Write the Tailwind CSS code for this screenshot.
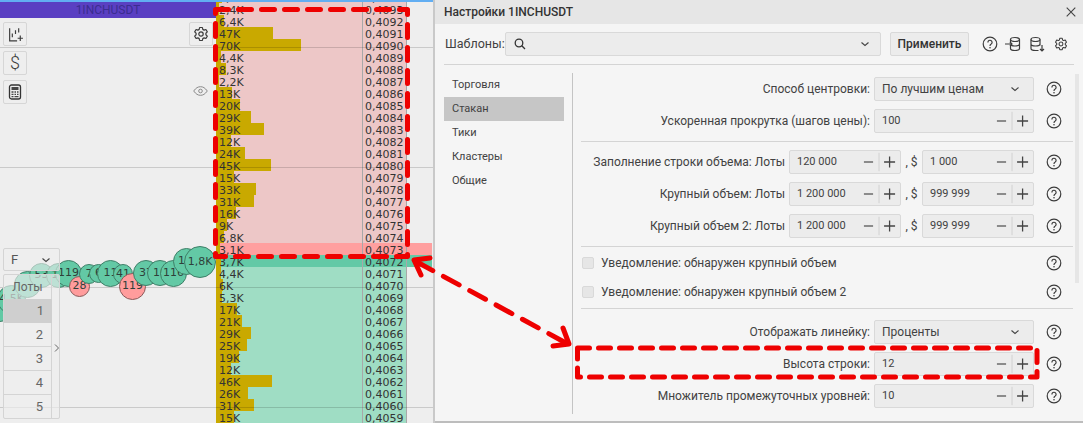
<!DOCTYPE html>
<html>
<head>
<meta charset="utf-8">
<script src="https://cdn.jsdelivr.net/npm/@tailwindcss/browser@4"></script>
</head>
<body class="bg-[#eeeeee]">
<svg class="hidden">
  <symbol id="help" viewBox="0 0 16 16"><circle cx="8" cy="8" r="6.8" fill="none" stroke="#3c3c3c" stroke-width="1.2"/><path d="M5.900 6.400a2.100 2.100 0 1 1 3.300 1.700c-.8.5-1.200.9-1.200 1.800" fill="none" stroke="#3c3c3c" stroke-width="1.2"/><circle cx="8" cy="11.800" r=".8" fill="#3c3c3c"/></symbol>
  <symbol id="chev" viewBox="0 0 12 12"><path d="M2.500 4.500 6 7.500l3.500-3" fill="none" stroke="#444" stroke-width="1.100"/></symbol>
  <symbol id="gear" viewBox="0 0 16 16"><path d="M6.600 1.500h2.800l.4 1.900 1.300.7 1.800-.6 1.400 2.400-1.400 1.300v1.600l1.400 1.300-1.400 2.400-1.800-.6-1.300.7-.4 1.900H6.600l-.4-1.900-1.300-.7-1.800.6-1.400-2.400 1.400-1.300V7.200L1.700 5.900l1.400-2.400 1.800.6 1.300-.7z" fill="none" stroke="#3c3c3c" stroke-width="1.200" stroke-linejoin="round"/><circle cx="8" cy="8" r="2.200" fill="none" stroke="#3c3c3c" stroke-width="1.200"/></symbol>
  <symbol id="stepctl" viewBox="0 0 44 24"><path d="M5 12h10" stroke="#555" stroke-width="1.400"/><path d="M21.500 2v20" stroke="#cfcfcf"/><path d="M27 12h12M33 6v12" stroke="#444" stroke-width="1.400"/></symbol>
</svg>

<div class="relative flex h-[423px] w-[1083px] overflow-hidden font-['Roboto',sans-serif] text-[12px] text-[#424242]">

  <!-- trading window -->
  <div class="relative flex h-full w-[435px] shrink-0 overflow-hidden border-r-2 border-[#c9c9c9] bg-[#eeeeee]">
    <div class="flex w-[216px] shrink-0 flex-col">
      <div class="mt-px flex h-[17px] items-center justify-center bg-[#5a3fc2] text-[12px] text-[#3b2d8f]">1INCHUSDT</div>
      <div class="mt-[4px] flex items-start justify-between pl-[3px] pr-[3px]">
        <div class="flex flex-col gap-[5px]">
          <div class="flex size-6 items-center justify-center rounded-[2px] border border-[#d6d6d6]">
            <svg class="size-[17px]" viewBox="0 0 16 16" fill="none" stroke="#3c3c3c" stroke-width="1.100"><path d="M2.500 2v12h7"/><path d="M5 10.500V7M8 7.500V4M11 6V2"/><path d="M10 11.500h5M12.500 9v5"/></svg>
          </div>
          <div class="flex size-6 items-center justify-center rounded-[2px] border border-[#d6d6d6] text-[18px] font-light leading-none text-[#3c3c3c]">$</div>
          <div class="flex size-6 items-center justify-center rounded-[2px] border border-[#d6d6d6]">
            <svg class="size-4" viewBox="0 0 16 16"><rect x="2.500" y="1" width="11" height="14" rx="2" fill="none" stroke="#333" stroke-width="1.300"/><rect x="4.500" y="3" width="7" height="3" fill="#444"/><path d="M4.500 8h2M7.500 8h1.500M10 8h1.500M4.500 10.300h2M7.500 10.300h1.500M10 10.300h1.500M4.500 12.600h2M7.500 12.600h4" stroke="#444" stroke-width="1.300"/></svg>
          </div>
        </div>
        <div class="flex size-6 items-center justify-center rounded-[2px] border border-[#d6d6d6]"><svg class="size-4"><use href="#gear"/></svg></div>
      </div>
    </div>

    <div id="ladder" class="mt-[-9px] w-[216px] shrink-0 font-['DejaVu_Sans',sans-serif] text-[11px] leading-[15px] text-[#333333]"></div>

    <!-- chart grid lines over the ladder -->
    <div class="absolute left-0 top-[47px] h-px w-full bg-black/15"></div>
    <div class="absolute left-0 top-[167px] h-px w-full bg-black/15"></div>
    <div class="absolute left-0 top-[287px] h-px w-full bg-black/15"></div>
    <div class="absolute left-0 top-[407px] h-px w-full bg-black/15"></div>
    <div class="absolute left-0 top-0 h-[1.5px] w-full bg-[#62aef2]"></div>

    <svg class="absolute left-[193px] top-[86px] h-[10px] w-[15px]" viewBox="0 0 15 10" fill="none" stroke="#8a8a8a"><path d="M.7 5C3 1.800 5 .7 7.500 .7S12 1.800 14.300 5C12 8.200 10 9.300 7.500 9.300S3 8.200 .7 5z"/><circle cx="7.500" cy="5" r="1.800"/></svg>

    <!-- trade bubbles -->
    <div class="font-['DejaVu_Sans',sans-serif] text-[11px] text-[#2f3f3a]">
      <div class="absolute left-[-10px] top-[302px] flex size-[20px] items-center justify-center rounded-full border border-[#3f7f68] bg-[#63c9a5]"></div>
      <div class="absolute left-[-3px] top-[285px] flex size-[29px] items-center justify-center rounded-full border border-[#3f7f68] bg-[#63c9a5]">4,5K</div>
      <div class="absolute left-[14px] top-[271px] flex size-[27px] items-center justify-center rounded-full border border-[#3f7f68] bg-[#63c9a5]"></div>
      <div class="absolute left-[29px] top-[263px] flex size-[25px] items-center justify-center rounded-full border border-[#3f7f68] bg-[#63c9a5]">53</div>
      <div class="absolute left-[46px] top-[263px] flex size-[25px] items-center justify-center rounded-full border border-[#3f7f68] bg-[#63c9a5]">11</div>
      <div class="absolute left-[55px] top-[260px] flex size-[27px] items-center justify-center rounded-full border border-[#3f7f68] bg-[#63c9a5]">119</div>
      <div class="absolute left-[69px] top-[276px] flex size-[21px] items-center justify-center rounded-full border border-[#8a5a5a] bg-[#ff9c9c]">28</div>
      <div class="absolute left-[79px] top-[264px] flex size-[20px] items-center justify-center rounded-full border border-[#3f7f68] bg-[#63c9a5]">7</div>
      <div class="absolute left-[89px] top-[264px] flex size-[19px] items-center justify-center rounded-full border border-[#3f7f68] bg-[#63c9a5]">6</div>
      <div class="absolute left-[97px] top-[260px] flex size-[27px] items-center justify-center rounded-full border border-[#3f7f68] bg-[#63c9a5]">11</div>
      <div class="absolute left-[113px] top-[264px] flex size-[20px] items-center justify-center rounded-full border border-[#3f7f68] bg-[#63c9a5]">41</div>
      <div class="absolute left-[119px] top-[273px] flex size-[27px] items-center justify-center rounded-full border border-[#8a5a5a] bg-[#ff9c9c]">119</div>
      <div class="absolute left-[133px] top-[260px] flex size-[26px] items-center justify-center rounded-full border border-[#3f7f68] bg-[#63c9a5]">37</div>
      <div class="absolute left-[147px] top-[260px] flex size-[26px] items-center justify-center rounded-full border border-[#3f7f68] bg-[#63c9a5]">10</div>
      <div class="absolute left-[160px] top-[260px] flex size-[27px] items-center justify-center rounded-full border border-[#3f7f68] bg-[#63c9a5]">116</div>
      <div class="absolute left-[173px] top-[248px] flex size-[27px] items-center justify-center rounded-full border border-[#3f7f68] bg-[#63c9a5] pr-[10px]">1</div>
      <div class="absolute left-[184px] top-[246px] flex size-[32px] items-center justify-center rounded-full border border-[#3f7f68] bg-[#63c9a5]">1,8K</div>
    </div>

    <!-- F select -->
    <div class="absolute left-[3px] top-[248px] flex h-[23px] w-[57px] items-center justify-between rounded-[2px] border border-[#d4d4d4] bg-[#eeeeee]/60 pl-[7px] pr-[7px] text-[13px] text-[#555]">
      <span>F</span><svg class="size-3"><use href="#chev"/></svg>
    </div>
    <!-- lots list -->
    <div class="absolute left-[3px] top-[274px] h-[145px] w-[57px] rounded-[2px] border border-[#d4d4d4] bg-[#eeeeee]/65 text-[#666]">
      <div class="flex h-[24px] w-[48px] items-center justify-center border-r border-[#d4d4d4]">Лоты</div>
      <div class="flex h-[24px] w-[48px] items-center justify-end bg-[#cfcfcf] pr-[8px] text-[13px]">1</div>
      <div class="flex h-[24px] w-[48px] items-center justify-end border-b border-r border-[#d4d4d4] pr-[8px] text-[13px]">2</div>
      <div class="flex h-[24px] w-[48px] items-center justify-end border-b border-r border-[#d4d4d4] pr-[8px] text-[13px]">3</div>
      <div class="flex h-[24px] w-[48px] items-center justify-end border-b border-r border-[#d4d4d4] pr-[8px] text-[13px]">4</div>
      <div class="flex h-[24px] w-[48px] items-center justify-end border-r border-[#d4d4d4] pr-[8px] text-[13px]">5</div>
      <svg class="absolute left-[49px] top-[68px] h-[10px] w-[7px]" viewBox="0 0 7 10" fill="none" stroke="#666"><path d="M2 1.500 5.500 5 2 8.500"/></svg>
    </div>
  </div>

  <!-- settings dialog -->
  <div class="flex h-full min-w-0 flex-1 flex-col border-b-2 border-[#bdbdbd] bg-[#f5f5f5]">
    <div class="flex h-6 shrink-0 items-center justify-between bg-[#e6e6e6] pl-[9px] pr-[7px]">
      <span class="text-[12px] font-medium text-[#333]">Настройки 1INCHUSDT</span>
      <svg class="size-[10px]" viewBox="0 0 10 10" stroke="#444" stroke-width="1.100"><path d="M.7 .7l8.600 8.600M9.300 .7L.7 9.300"/></svg>
    </div>

    <div class="mx-[9px] flex h-[41px] shrink-0 items-center border-b border-[#d4d4d4]">
      <span class="w-[61px] shrink-0 pl-px text-[12.500px]">Шаблоны:</span>
      <div class="flex h-6 w-[376px] shrink-0 items-center justify-between rounded-[2px] border border-[#d9d9d9] bg-[#ececec] pl-[8px] pr-[9px]">
        <svg class="size-[12px]" viewBox="0 0 12 12" fill="none" stroke="#333" stroke-width="1.300"><circle cx="5" cy="5" r="3.800"/><path d="M7.800 7.800 11 11"/></svg>
        <svg class="size-3"><use href="#chev"/></svg>
      </div>
      <div class="ml-[9px] flex h-6 w-[79px] shrink-0 items-center justify-center rounded-[2px] border border-[#d9d9d9] bg-[#ececec] font-medium text-[#333]">Применить</div>
      <svg class="ml-[13px] size-4"><use href="#help"/></svg>
      <svg class="ml-[7px] size-4" viewBox="0 0 16 16" fill="none" stroke="#3c3c3c" stroke-width="1.200"><ellipse cx="10" cy="3.500" rx="4.500" ry="2"/><path d="M5.500 3.500v9c0 1.100 2 2 4.500 2s4.500-.9 4.500-2v-9M5.500 8c0 1.100 2 2 4.500 2s4.500-.9 4.500-2"/><path d="M0 8h7M5 6l2 2-2 2" fill="#f5f5f5"/></svg>
      <svg class="ml-[8px] size-4" viewBox="0 0 16 16" fill="none" stroke="#3c3c3c" stroke-width="1.200"><ellipse cx="6.500" cy="3.500" rx="4.500" ry="2"/><path d="M2 3.500v9c0 1.100 2 2 4.500 2h3M11 3.500v6M2 8c0 1.100 2 2 4.500 2s4.500-.9 4.500-2"/><path d="M13 9v6M11 13l2 2 2-2"/></svg>
      <svg class="ml-[9px] size-[14px]"><use href="#gear"/></svg>
    </div>

    <div class="flex min-h-0 flex-1 pt-[8px]">
      <!-- sidebar -->
      <div class="ml-[9px] h-[341px] w-[129px] shrink-0 border-r border-[#c4c4c4]">
        <div class="w-[120px] text-[11px]">
          <div class="flex h-6 items-center pl-[8px] pt-px">Торговля</div>
          <div class="flex h-6 items-center bg-[#c6c6c6] pl-[8px] pt-px">Стакан</div>
          <div class="flex h-6 items-center pl-[8px] pt-px">Тики</div>
          <div class="flex h-6 items-center pl-[8px] pt-px">Кластеры</div>
          <div class="flex h-6 items-center pl-[8px] pt-px">Общие</div>
        </div>
      </div>

      <!-- settings -->
      <div class="relative flex w-[500px] flex-col pl-[8px] pt-[4px]">
        <div class="absolute right-[-6px] top-[1px] h-[209px] w-[4px] bg-[#e6e6e6]"></div>

        <div class="flex h-6 items-center justify-end pr-[11px]">
          <span class="mr-[4px] whitespace-nowrap">Способ центровки:</span>
          <div class="flex h-6 w-[160px] items-center justify-between rounded-[2px] border border-[#d9d9d9] bg-[#ececec] pl-[7px] pr-[12px]"><span>По лучшим ценам</span><svg class="size-3"><use href="#chev"/></svg></div>
          <svg class="ml-[12px] size-4"><use href="#help"/></svg>
        </div>
        <div class="mt-[8px] flex h-6 items-center justify-end pr-[11px]">
          <span class="mr-[4px] whitespace-nowrap">Ускоренная прокрутка (шагов цены):</span>
          <div class="relative flex h-6 w-[160px] items-center rounded-[2px] border border-[#d9d9d9] bg-[#ececec] pl-[7px] text-[11px]">100<svg class="absolute right-0 top-0 h-[22px] w-[41px]"><use href="#stepctl"/></svg></div>
          <svg class="ml-[12px] size-4"><use href="#help"/></svg>
        </div>

        <div class="mt-[8px] h-px bg-[#d4d4d4]"></div>

        <div class="mt-[8px] flex h-6 items-center justify-end pr-[11px]">
          <span class="mr-[4px] whitespace-nowrap">Заполнение строки объема: Лоты</span>
          <div class="relative flex h-6 w-[112px] items-center rounded-[2px] border border-[#d9d9d9] bg-[#ececec] pl-[7px] text-[11px]">120 000<svg class="absolute right-0 top-0 h-[22px] w-[41px]"><use href="#stepctl"/></svg></div>
          <span class="w-[21px] text-center">, $</span>
          <div class="relative flex h-6 w-[112px] items-center rounded-[2px] border border-[#d9d9d9] bg-[#ececec] pl-[7px] text-[11px]">1 000<svg class="absolute right-0 top-0 h-[22px] w-[41px]"><use href="#stepctl"/></svg></div>
          <svg class="ml-[12px] size-4"><use href="#help"/></svg>
        </div>
        <div class="mt-[8px] flex h-6 items-center justify-end pr-[11px]">
          <span class="mr-[4px] whitespace-nowrap">Крупный объем: Лоты</span>
          <div class="relative flex h-6 w-[112px] items-center rounded-[2px] border border-[#d9d9d9] bg-[#ececec] pl-[7px] text-[11px]">1 200 000<svg class="absolute right-0 top-0 h-[22px] w-[41px]"><use href="#stepctl"/></svg></div>
          <span class="w-[21px] text-center">, $</span>
          <div class="relative flex h-6 w-[112px] items-center rounded-[2px] border border-[#d9d9d9] bg-[#ececec] pl-[7px] text-[11px]">999 999<svg class="absolute right-0 top-0 h-[22px] w-[41px]"><use href="#stepctl"/></svg></div>
          <svg class="ml-[12px] size-4"><use href="#help"/></svg>
        </div>
        <div class="mt-[8px] flex h-6 items-center justify-end pr-[11px]">
          <span class="mr-[4px] whitespace-nowrap">Крупный объем 2: Лоты</span>
          <div class="relative flex h-6 w-[112px] items-center rounded-[2px] border border-[#d9d9d9] bg-[#ececec] pl-[7px] text-[11px]">1 200 000<svg class="absolute right-0 top-0 h-[22px] w-[41px]"><use href="#stepctl"/></svg></div>
          <span class="w-[21px] text-center">, $</span>
          <div class="relative flex h-6 w-[112px] items-center rounded-[2px] border border-[#d9d9d9] bg-[#ececec] pl-[7px] text-[11px]">999 999<svg class="absolute right-0 top-0 h-[22px] w-[41px]"><use href="#stepctl"/></svg></div>
          <svg class="ml-[12px] size-4"><use href="#help"/></svg>
        </div>

        <div class="mt-[8px] h-px bg-[#d4d4d4]"></div>

        <div class="mt-px flex h-[29px] items-center pr-[11px]">
          <span class="ml-px size-[12px] rounded-[2px] border border-[#d9d9d9] bg-[#e6e6e6]"></span>
          <span class="ml-[7px] flex-1">Уведомление: обнаружен крупный объем</span>
          <svg class="size-4"><use href="#help"/></svg>
        </div>
        <div class="flex h-[29px] items-center pr-[11px]">
          <span class="ml-px size-[12px] rounded-[2px] border border-[#d9d9d9] bg-[#e6e6e6]"></span>
          <span class="ml-[7px] flex-1">Уведомление: обнаружен крупный объем 2</span>
          <svg class="size-4"><use href="#help"/></svg>
        </div>

        <div class="mt-[2px] h-px bg-[#d4d4d4]"></div>

        <div class="mt-[11px] flex h-6 items-center justify-end pr-[11px]">
          <span class="mr-[4px] whitespace-nowrap">Отображать линейку:</span>
          <div class="flex h-6 w-[160px] items-center justify-between rounded-[2px] border border-[#d9d9d9] bg-[#ececec] pl-[7px] pr-[12px]"><span>Проценты</span><svg class="size-3"><use href="#chev"/></svg></div>
          <svg class="ml-[12px] size-4"><use href="#help"/></svg>
        </div>
        <div class="mt-[8px] flex h-6 items-center justify-end pr-[11px]">
          <span class="mr-[4px] whitespace-nowrap">Высота строки:</span>
          <div class="relative flex h-6 w-[160px] items-center rounded-[2px] border border-[#d9d9d9] bg-[#ececec] pl-[7px] text-[11px]">12<svg class="absolute right-0 top-0 h-[22px] w-[41px]"><use href="#stepctl"/></svg></div>
          <svg class="ml-[12px] size-4"><use href="#help"/></svg>
        </div>
        <div class="mt-[8px] flex h-6 items-center justify-end pr-[11px]">
          <span class="mr-[4px] whitespace-nowrap">Множитель промежуточных уровней:</span>
          <div class="relative flex h-6 w-[160px] items-center rounded-[2px] border border-[#d9d9d9] bg-[#ececec] pl-[7px] text-[11px]">10<svg class="absolute right-0 top-0 h-[22px] w-[41px]"><use href="#stepctl"/></svg></div>
          <svg class="ml-[12px] size-4"><use href="#help"/></svg>
        </div>
      </div>
    </div>
  </div>

  <!-- red annotations -->
  <svg class="pointer-events-none absolute left-0 top-0 h-[423px] w-[1083px]" viewBox="0 0 1083 423" fill="none" stroke="#ee0000" stroke-width="5" stroke-linecap="round" stroke-linejoin="round">
    <rect x="215.500" y="9.500" width="192" height="247" stroke-dasharray="13 10"/>
    <rect x="577.500" y="348" width="459.500" height="29" stroke-dasharray="12 9"/>
    <path d="M417 262 566 343" stroke-dasharray="18 12"/>
    <path d="M430 258 414 260 421 275M553 346 569 344 563 328"/>
  </svg>
</div>

<script>
  var rows = [
    ["5,0K","0,4094"],["2,4K","0,4093"],["6,4K","0,4092"],["47K","0,4091"],["70K","0,4090"],["4,4K","0,4089"],
    ["8,3K","0,4088"],["2,2K","0,4087"],["13K","0,4086"],["20K","0,4085"],["29K","0,4084"],["39K","0,4083"],
    ["12K","0,4082"],["24K","0,4081"],["45K","0,4080"],["15K","0,4079"],["33K","0,4078"],["31K","0,4077"],
    ["16K","0,4076"],["9K","0,4075"],["6,8K","0,4074"],["3,1K","0,4073"],["3,7K","0,4072"],["4,4K","0,4071"],
    ["6K","0,4070"],["5,3K","0,4069"],["17K","0,4068"],["21K","0,4067"],["29K","0,4066"],["25K","0,4065"],
    ["19K","0,4064"],["12K","0,4063"],["46K","0,4062"],["26K","0,4061"],["31K","0,4060"],["15K","0,4059"]
  ];
  var html = "";
  rows.forEach(function (r, i) {
    var k = parseFloat(r[0].replace(",", "."));
    var bg = i < 21 ? "w-[191px] bg-[#edc7c7]" : i === 21 ? "w-[216px] bg-[#ff9f9f]" : i === 22 ? "w-[216px] bg-[#63c9a6]" : "w-[191px] bg-[#9fddc4]";
    html += '<div class="flex h-3 ' + bg + '">' +
      '<div class="relative h-3 w-[146px] shrink-0 pl-[3px]">' +
      '<div class="absolute left-0 top-0 h-3 bg-[#c9a900]" style="width:' + Math.round(k * 1.22) + 'px"></div>' +
      '<span class="relative">' + r[0] + '</span></div>' +
      '<div class="h-3 w-[45px] shrink-0 border-x border-[#a8a8a8] pl-[2px]">' + r[1] + '</div></div>';
  });
  document.getElementById("ladder").innerHTML = html;
</script>
</body>
</html>
